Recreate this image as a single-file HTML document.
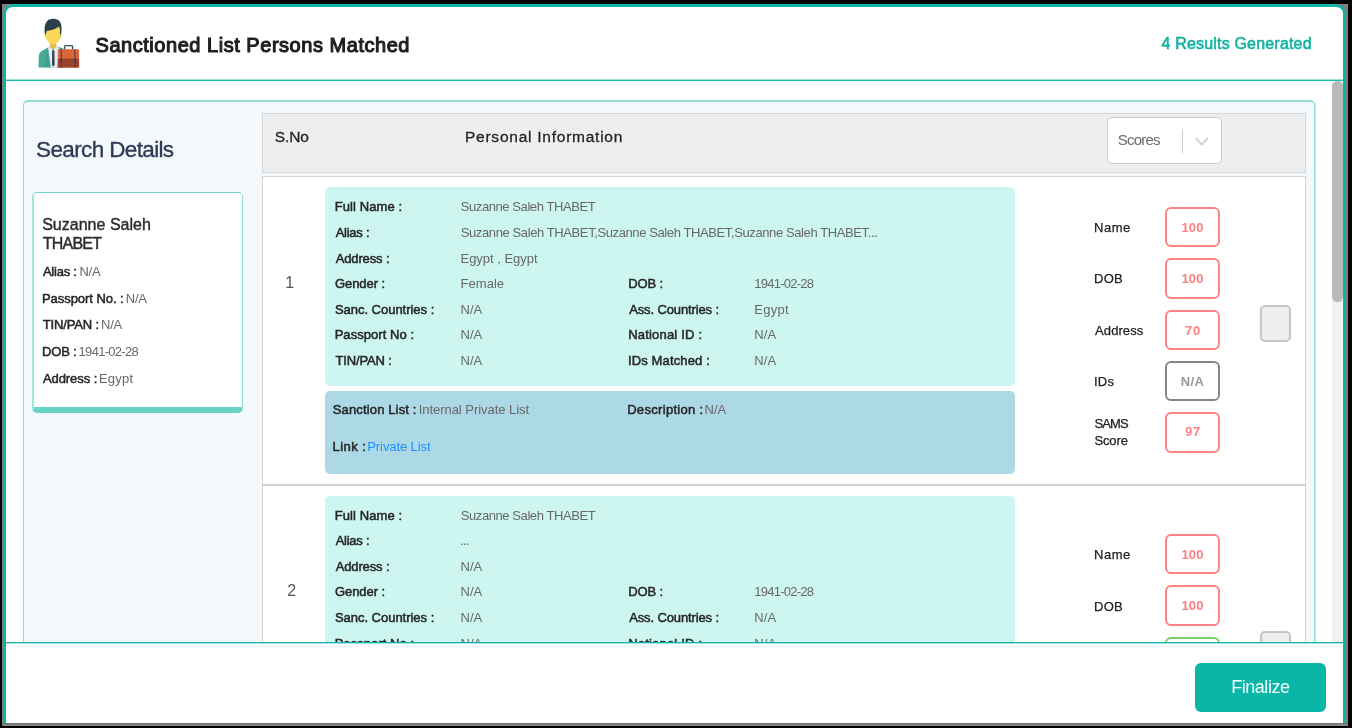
<!DOCTYPE html>
<html><head><meta charset="utf-8"><title>Sanctioned List Persons Matched</title>
<style>
html,body{margin:0;padding:0;}
body{width:1352px;height:728px;background:#000;overflow:hidden;position:relative;font-family:'Liberation Sans',sans-serif;}
div,span,svg{position:absolute;box-sizing:content-box;}
span{white-space:pre;}
#clip{left:6px;top:81px;width:1326px;height:561px;overflow:hidden;}
#inner{left:-6px;top:-81px;width:1352px;height:900px;will-change:transform;}
#top{left:0;top:0;width:1352px;height:728px;will-change:transform;}
</style></head><body>
<div style="left:2px;top:4px;width:1346px;height:722px;background:#808080;"></div>
<div style="left:4px;top:4px;width:1337px;height:716px;background:#fff;border:2px solid #0bb5a5;border-top-width:3px;border-bottom:0;border-radius:9px 9px 0 0;"></div>
<div style="left:2px;top:723px;width:1346px;height:1px;background:#707272;"></div>
<div style="left:190px;top:724px;width:1158px;height:2px;background:#838787;"></div>
<div id="clip"><div id="inner">
<div style="left:23px;top:100px;width:1290px;height:800px;background:#f3f8fc;border-style:solid;border-color:#8de0d6;border-width:2px 1px 0 1px;border-radius:5px 5px 0 0;"></div>
<div style="left:1315px;top:103px;width:1px;height:800px;background:#c9f0ec;"></div>
<div style="left:32px;top:192px;width:208px;height:214px;background:#fff;border-style:solid;border-color:#6fd6c9 #84ddd2 #66d4c6 #a3e6de;border-width:1px 1px 6px 2px;border-radius:5px;box-shadow:0 0 2px #fff;"></div>
<div style="left:262px;top:113px;width:1042px;height:58px;background:#eeeeee;border:1px solid #d6d6d6;"></div>
<div style="left:1107px;top:117px;width:113px;height:45px;background:#fff;border:1px solid #ccc;border-radius:5px;"></div>
<div style="left:1182px;top:129px;width:1px;height:24px;background:#ccc;"></div>
<svg style="left:1193px;top:135px" width="18" height="14" viewBox="0 0 18 14"><path d="M3.2 3.6 L8.8 9.6 L14.4 3.6" fill="none" stroke="#cfcfcf" stroke-width="1.9" stroke-linecap="round" stroke-linejoin="round"/></svg>
<div style="left:262px;top:176px;width:1042px;height:307px;background:#fff;border:1px solid #d2d2d2;"></div>
<div style="left:262px;top:485px;width:1042px;height:344px;background:#fff;border:1px solid #d2d2d2;"></div>
<div style="left:325px;top:187px;width:690px;height:199px;background:#cdf6f1;border-radius:5px;"></div>
<div style="left:325px;top:496px;width:690px;height:199px;background:#cdf6f1;border-radius:5px;"></div>
<div style="left:325px;top:391px;width:690px;height:82.5px;background:#add8e6;border-radius:5px;"></div>
<div style="left:325px;top:700px;width:690px;height:118px;background:#add8e6;border-radius:5px;"></div>
<div style="left:1165px;top:206.5px;width:50.5px;height:36.5px;border:2px solid #ff8585;border-radius:6px;background:#fff;"></div>
<div style="left:1165px;top:258px;width:50.5px;height:36.5px;border:2px solid #ff8585;border-radius:6px;background:#fff;"></div>
<div style="left:1165px;top:309.5px;width:50.5px;height:36.5px;border:2px solid #ff8585;border-radius:6px;background:#fff;"></div>
<div style="left:1165px;top:360.5px;width:50.5px;height:36.5px;border:2px solid #858585;border-radius:6px;background:#fff;"></div>
<div style="left:1165px;top:412px;width:50.5px;height:36.5px;border:2px solid #ff8585;border-radius:6px;background:#fff;"></div>
<div style="left:1165px;top:533.5px;width:50.5px;height:36.5px;border:2px solid #ff8585;border-radius:6px;background:#fff;"></div>
<div style="left:1165px;top:585px;width:50.5px;height:36.5px;border:2px solid #ff8585;border-radius:6px;background:#fff;"></div>
<div style="left:1165px;top:636.5px;width:50.5px;height:36.5px;border:2px solid #7ccd6a;border-radius:6px;background:#fff;"></div>
<div style="left:1165px;top:687.5px;width:50.5px;height:36.5px;border:2px solid #858585;border-radius:6px;background:#fff;"></div>
<div style="left:1165px;top:739px;width:50.5px;height:36.5px;border:2px solid #ff8585;border-radius:6px;background:#fff;"></div>
<div style="left:1260px;top:305px;width:27px;height:32.5px;background:#eeeeee;border:2px solid #c6c6c6;border-radius:5px;"></div>
<div style="left:1260px;top:631px;width:27px;height:32.5px;background:#eeeeee;border:2px solid #c6c6c6;border-radius:5px;"></div>
<span style="left:36.07px;top:139px;font-size:22.5px;line-height:22.5px;color:#2f3b55;letter-spacing:-0.635px;-webkit-text-stroke:0.35px #2f3b55;">Search Details</span>
<span style="left:42.15px;top:217px;font-size:16px;line-height:16px;color:#2b2b2b;letter-spacing:0.021px;-webkit-text-stroke:0.4px #2b2b2b;">Suzanne Saleh</span>
<span style="left:42.65px;top:236px;font-size:16px;line-height:16px;color:#2b2b2b;letter-spacing:-0.74px;-webkit-text-stroke:0.4px #2b2b2b;">THABET</span>
<span style="left:42.95px;top:265px;font-size:13px;line-height:13px;color:#262626;letter-spacing:-0.242px;-webkit-text-stroke:0.5px #262626;">Alias :</span>
<span style="left:79.4px;top:265px;font-size:13px;line-height:13px;color:#686868;letter-spacing:-0.2px;">N/A</span>
<span style="left:41.95px;top:292px;font-size:13px;line-height:13px;color:#262626;letter-spacing:-0.05px;-webkit-text-stroke:0.5px #262626;">Passport No. :</span>
<span style="left:125.8px;top:292px;font-size:13px;line-height:13px;color:#686868;letter-spacing:-0.25px;">N/A</span>
<span style="left:42.7px;top:318px;font-size:13px;line-height:13px;color:#262626;letter-spacing:-0.15px;-webkit-text-stroke:0.5px #262626;">TIN/PAN :</span>
<span style="left:101.1px;top:318px;font-size:13px;line-height:13px;color:#686868;letter-spacing:-0.3px;">N/A</span>
<span style="left:41.95px;top:345px;font-size:13px;line-height:13px;color:#262626;letter-spacing:-0.113px;-webkit-text-stroke:0.5px #262626;">DOB :</span>
<span style="left:78.6px;top:345px;font-size:13px;line-height:13px;color:#686868;letter-spacing:-0.711px;">1941-02-28</span>
<span style="left:42.95px;top:372px;font-size:13px;line-height:13px;color:#262626;letter-spacing:-0.069px;-webkit-text-stroke:0.5px #262626;">Address :</span>
<span style="left:99.0px;top:372px;font-size:13px;line-height:13px;color:#686868;letter-spacing:0.188px;">Egypt</span>
<span style="left:274.69px;top:129px;font-size:15.5px;line-height:15.5px;color:#222;letter-spacing:-0.06px;-webkit-text-stroke:0.28px #222;">S.No</span>
<span style="left:464.99px;top:129px;font-size:15.5px;line-height:15.5px;color:#222;letter-spacing:0.756px;-webkit-text-stroke:0.28px #222;">Personal Information</span>
<span style="left:1117.85px;top:132px;font-size:15px;line-height:15px;color:#6a6a6a;letter-spacing:-0.8px;">Scores</span>
<span style="left:334.65px;top:200px;font-size:13px;line-height:13px;color:#262626;letter-spacing:0.095px;-webkit-text-stroke:0.5px #262626;">Full Name :</span>
<span style="left:335.65px;top:226px;font-size:13px;line-height:13px;color:#262626;letter-spacing:-0.242px;-webkit-text-stroke:0.5px #262626;">Alias :</span>
<span style="left:335.65px;top:252px;font-size:13px;line-height:13px;color:#262626;letter-spacing:-0.119px;-webkit-text-stroke:0.5px #262626;">Address :</span>
<span style="left:334.9px;top:277px;font-size:13px;line-height:13px;color:#262626;letter-spacing:-0.036px;-webkit-text-stroke:0.5px #262626;">Gender :</span>
<span style="left:334.9px;top:303px;font-size:13px;line-height:13px;color:#262626;letter-spacing:-0.022px;-webkit-text-stroke:0.5px #262626;">Sanc. Countries :</span>
<span style="left:334.65px;top:328px;font-size:13px;line-height:13px;color:#262626;letter-spacing:0.058px;-webkit-text-stroke:0.5px #262626;">Passport No :</span>
<span style="left:335.4px;top:354px;font-size:13px;line-height:13px;color:#262626;letter-spacing:-0.125px;-webkit-text-stroke:0.5px #262626;">TIN/PAN :</span>
<span style="left:628.15px;top:277px;font-size:13px;line-height:13px;color:#262626;letter-spacing:-0.113px;-webkit-text-stroke:0.5px #262626;">DOB :</span>
<span style="left:629.15px;top:303px;font-size:13px;line-height:13px;color:#262626;letter-spacing:-0.12px;-webkit-text-stroke:0.5px #262626;">Ass. Countries :</span>
<span style="left:628.15px;top:328px;font-size:13px;line-height:13px;color:#262626;letter-spacing:0.196px;-webkit-text-stroke:0.5px #262626;">National ID :</span>
<span style="left:627.9px;top:354px;font-size:13px;line-height:13px;color:#262626;letter-spacing:0.138px;-webkit-text-stroke:0.5px #262626;">IDs Matched :</span>
<span style="left:460.75px;top:200px;font-size:13px;line-height:13px;color:#686868;letter-spacing:-0.418px;">Suzanne Saleh THABET</span>
<span style="left:460.75px;top:226px;font-size:13px;line-height:13px;color:#686868;letter-spacing:-0.395px;">Suzanne Saleh THABET,Suzanne Saleh THABET,Suzanne Saleh THABET...</span>
<span style="left:460.5px;top:252px;font-size:13px;line-height:13px;color:#686868;letter-spacing:-0.021px;">Egypt , Egypt</span>
<span style="left:460.5px;top:277px;font-size:13px;line-height:13px;color:#686868;letter-spacing:0.05px;">Female</span>
<span style="left:460.5px;top:303px;font-size:13px;line-height:13px;color:#686868;letter-spacing:0.05px;">N/A</span>
<span style="left:460.5px;top:328px;font-size:13px;line-height:13px;color:#686868;letter-spacing:0.05px;">N/A</span>
<span style="left:460.5px;top:354px;font-size:13px;line-height:13px;color:#686868;letter-spacing:0.05px;">N/A</span>
<span style="left:754.3px;top:277px;font-size:13px;line-height:13px;color:#686868;letter-spacing:-0.756px;">1941-02-28</span>
<span style="left:754.3px;top:303px;font-size:13px;line-height:13px;color:#686868;letter-spacing:0.262px;">Egypt</span>
<span style="left:754.3px;top:328px;font-size:13px;line-height:13px;color:#686868;letter-spacing:0.05px;">N/A</span>
<span style="left:754.3px;top:354px;font-size:13px;line-height:13px;color:#686868;letter-spacing:0.05px;">N/A</span>
<span style="left:285.15px;top:275px;font-size:16px;line-height:16px;color:#555;">1</span>
<span style="left:1094.12px;top:221px;font-size:13px;line-height:13px;color:#222;letter-spacing:0.45px;-webkit-text-stroke:0.25px #222;">Name</span>
<span style="left:1094.12px;top:272px;font-size:13px;line-height:13px;color:#222;letter-spacing:0.225px;-webkit-text-stroke:0.25px #222;">DOB</span>
<span style="left:1095.12px;top:324px;font-size:13px;line-height:13px;color:#222;letter-spacing:0.067px;-webkit-text-stroke:0.25px #222;">Address</span>
<span style="left:1093.88px;top:375px;font-size:13px;line-height:13px;color:#222;letter-spacing:0.35px;-webkit-text-stroke:0.25px #222;">IDs</span>
<span style="left:1094.38px;top:417px;font-size:13px;line-height:13px;color:#222;letter-spacing:-0.85px;-webkit-text-stroke:0.25px #222;">SAMS</span>
<span style="left:1094.38px;top:434px;font-size:13px;line-height:13px;color:#222;letter-spacing:-0.1px;-webkit-text-stroke:0.25px #222;">Score</span>
<span style="left:334.65px;top:509px;font-size:13px;line-height:13px;color:#262626;letter-spacing:0.095px;-webkit-text-stroke:0.5px #262626;">Full Name :</span>
<span style="left:335.65px;top:534px;font-size:13px;line-height:13px;color:#262626;letter-spacing:-0.242px;-webkit-text-stroke:0.5px #262626;">Alias :</span>
<span style="left:335.65px;top:560px;font-size:13px;line-height:13px;color:#262626;letter-spacing:-0.119px;-webkit-text-stroke:0.5px #262626;">Address :</span>
<span style="left:334.9px;top:585px;font-size:13px;line-height:13px;color:#262626;letter-spacing:-0.036px;-webkit-text-stroke:0.5px #262626;">Gender :</span>
<span style="left:334.9px;top:611px;font-size:13px;line-height:13px;color:#262626;letter-spacing:-0.022px;-webkit-text-stroke:0.5px #262626;">Sanc. Countries :</span>
<span style="left:334.65px;top:637px;font-size:13px;line-height:13px;color:#262626;letter-spacing:0.058px;-webkit-text-stroke:0.5px #262626;">Passport No :</span>
<span style="left:335.4px;top:662px;font-size:13px;line-height:13px;color:#262626;letter-spacing:-0.125px;-webkit-text-stroke:0.5px #262626;">TIN/PAN :</span>
<span style="left:628.15px;top:585px;font-size:13px;line-height:13px;color:#262626;letter-spacing:-0.113px;-webkit-text-stroke:0.5px #262626;">DOB :</span>
<span style="left:629.15px;top:611px;font-size:13px;line-height:13px;color:#262626;letter-spacing:-0.12px;-webkit-text-stroke:0.5px #262626;">Ass. Countries :</span>
<span style="left:628.15px;top:637px;font-size:13px;line-height:13px;color:#262626;letter-spacing:0.196px;-webkit-text-stroke:0.5px #262626;">National ID :</span>
<span style="left:627.9px;top:662px;font-size:13px;line-height:13px;color:#262626;letter-spacing:0.138px;-webkit-text-stroke:0.5px #262626;">IDs Matched :</span>
<span style="left:460.75px;top:509px;font-size:13px;line-height:13px;color:#686868;letter-spacing:-0.418px;">Suzanne Saleh THABET</span>
<span style="left:460.25px;top:534px;font-size:13px;line-height:13px;color:#686868;letter-spacing:-0.75px;">...</span>
<span style="left:460.5px;top:560px;font-size:13px;line-height:13px;color:#686868;letter-spacing:0.05px;">N/A</span>
<span style="left:460.5px;top:585px;font-size:13px;line-height:13px;color:#686868;letter-spacing:0.05px;">N/A</span>
<span style="left:460.5px;top:611px;font-size:13px;line-height:13px;color:#686868;letter-spacing:0.05px;">N/A</span>
<span style="left:460.5px;top:637px;font-size:13px;line-height:13px;color:#686868;letter-spacing:0.05px;">N/A</span>
<span style="left:460.5px;top:662px;font-size:13px;line-height:13px;color:#686868;letter-spacing:0.05px;">N/A</span>
<span style="left:754.3px;top:585px;font-size:13px;line-height:13px;color:#686868;letter-spacing:-0.756px;">1941-02-28</span>
<span style="left:754.3px;top:611px;font-size:13px;line-height:13px;color:#686868;letter-spacing:0.05px;">N/A</span>
<span style="left:754.3px;top:637px;font-size:13px;line-height:13px;color:#686868;letter-spacing:0.05px;">N/A</span>
<span style="left:754.3px;top:662px;font-size:13px;line-height:13px;color:#686868;letter-spacing:0.05px;">N/A</span>
<span style="left:287.15px;top:583px;font-size:16px;line-height:16px;color:#555;">2</span>
<span style="left:1094.12px;top:548px;font-size:13px;line-height:13px;color:#222;letter-spacing:0.45px;-webkit-text-stroke:0.25px #222;">Name</span>
<span style="left:1094.12px;top:600px;font-size:13px;line-height:13px;color:#222;letter-spacing:0.225px;-webkit-text-stroke:0.25px #222;">DOB</span>
<span style="left:1095.12px;top:650px;font-size:13px;line-height:13px;color:#222;letter-spacing:0.067px;-webkit-text-stroke:0.25px #222;">Address</span>
<span style="left:1093.88px;top:702px;font-size:13px;line-height:13px;color:#222;letter-spacing:0.35px;-webkit-text-stroke:0.25px #222;">IDs</span>
<span style="left:1094.38px;top:744px;font-size:13px;line-height:13px;color:#222;letter-spacing:-0.85px;-webkit-text-stroke:0.25px #222;">SAMS</span>
<span style="left:1094.38px;top:761px;font-size:13px;line-height:13px;color:#222;letter-spacing:-0.1px;-webkit-text-stroke:0.25px #222;">Score</span>
<span style="left:332.8px;top:403px;font-size:13px;line-height:13px;color:#262626;letter-spacing:0.139px;-webkit-text-stroke:0.5px #262626;">Sanction List :</span>
<span style="left:418.65px;top:403px;font-size:13px;line-height:13px;color:#686868;letter-spacing:-0.04px;">Internal Private List</span>
<span style="left:627.15px;top:403px;font-size:13px;line-height:13px;color:#262626;letter-spacing:0.317px;-webkit-text-stroke:0.5px #262626;">Description :</span>
<span style="left:704.5px;top:403px;font-size:13px;line-height:13px;color:#686868;letter-spacing:0.05px;">N/A</span>
<span style="left:332.55px;top:440px;font-size:13px;line-height:13px;color:#262626;letter-spacing:0.47px;-webkit-text-stroke:0.5px #262626;">Link :</span>
<span style="left:367.3px;top:440px;font-size:13px;line-height:13px;color:#1e8fff;letter-spacing:-0.095px;">Private List</span>
<span style="left:1181.45px;top:221px;font-size:13px;line-height:13px;color:#ff8080;font-weight:bold;letter-spacing:0.175px;">100</span>
<span style="left:1181.45px;top:272px;font-size:13px;line-height:13px;color:#ff8080;font-weight:bold;letter-spacing:0.175px;">100</span>
<span style="left:1184.95px;top:324px;font-size:13px;line-height:13px;color:#ff8080;font-weight:bold;letter-spacing:0.8px;">70</span>
<span style="left:1180.75px;top:375px;font-size:13px;line-height:13px;color:#999;font-weight:bold;letter-spacing:0.375px;">N/A</span>
<span style="left:1184.95px;top:425px;font-size:13px;line-height:13px;color:#ff8080;font-weight:bold;letter-spacing:0.8px;">97</span>
<span style="left:1181.45px;top:548px;font-size:13px;line-height:13px;color:#ff8080;font-weight:bold;letter-spacing:0.175px;">100</span>
<span style="left:1181.45px;top:599px;font-size:13px;line-height:13px;color:#ff8080;font-weight:bold;letter-spacing:0.175px;">100</span>
<span style="left:1184.95px;top:650px;font-size:13px;line-height:13px;color:#ff8080;font-weight:bold;letter-spacing:0.8px;">70</span>
<span style="left:1180.75px;top:702px;font-size:13px;line-height:13px;color:#999;font-weight:bold;letter-spacing:0.375px;">N/A</span>
<span style="left:1184.95px;top:752px;font-size:13px;line-height:13px;color:#ff8080;font-weight:bold;letter-spacing:0.8px;">97</span>
</div></div>
<div style="left:6px;top:79px;width:1337px;height:1px;background:#a3e2db;"></div>
<div style="left:6px;top:80px;width:1337px;height:1px;background:#1cb8a9;"></div>
<div style="left:1332px;top:81px;width:11px;height:561px;background:#f1f1f1;"></div>
<div style="left:1332px;top:81px;width:11px;height:220.5px;background:#b9b9b9;border-radius:5.5px;"></div>
<div style="left:6px;top:642px;width:1337px;height:1px;background:#12b6a7;"></div>
<div style="left:6px;top:643px;width:1337px;height:1px;background:#a5e3dc;"></div>
<div style="left:1195px;top:662.5px;width:131px;height:49px;background:#0ab6a7;border-radius:6px;"></div>
<div id="top">
<svg style="left:36px;top:16px" width="46" height="54" viewBox="36 16 46 54">
<path d="M38.5 67.6 L38.8 56 Q39.2 52.2 42.5 50.6 L50.2 46.6 L56.2 46.6 L63.6 48.4 L63.6 50 L61.5 50 L61.5 67.6 Z" fill="#45ab96"/>
<path d="M50.2 46.4 L53 50 L56.2 46.4 L59.2 48 L57.6 67.6 L50.6 67.6 L48 48 Z" fill="#e9eaf0"/>
<path d="M50.2 46.4 L48 48 L51 67.6 L44 67.6 Q46 56 47 48.5 Z" fill="#3a9c88" opacity=".55"/>
<path d="M49.9 41.5 L56.3 41.5 L56.3 46.6 L53.1 49.6 L49.9 46.6 Z" fill="#e6bd4c"/>
<path d="M52.2 50.8 L53.3 49.8 L54.4 50.8 L54.6 65 L53.3 66.4 L52 65 Z" fill="#2e4352"/>
<path d="M45.4 30 Q45.4 24 53.2 24 Q61.2 24 61.2 30 L61.2 35 Q61.6 34.6 61.9 35.4 Q61.9 37.6 60.6 38 Q59.4 41.6 56.3 43.6 Q53.2 45.4 50 43.6 Q47 41.6 46 38 Q44.7 37.6 44.7 35.4 Q45 34.6 45.4 35 Z" fill="#fbd65c"/>
<path d="M44.8 34.2 C44.3 28 44.6 23.5 47.5 20.7 C50.2 18.3 56 18 58.8 20.5 C61.8 23.2 62 28 61.1 34.9 L59.9 34 C60.2 31 60 28.5 59 26.5 C55 29.5 50 30.5 46.7 30.9 C46.2 32 46 33.4 45.9 34.8 Z" fill="#2b3f4d"/>
<path d="M64.6 49.6 L64.6 46.6 Q64.6 45.6 65.6 45.6 L71.6 45.6 Q72.6 45.6 72.6 46.6 L72.6 49.6" fill="none" stroke="#3c4f5c" stroke-width="1.4"/>
<rect x="57.8" y="49.3" width="21.3" height="18.3" rx="1.2" fill="#d8673b"/>
<path d="M57.8 58.6 L79.1 58.6 L79.1 66.4 Q79.1 67.6 77.9 67.6 L59 67.6 Q57.8 67.6 57.8 66.4 Z" fill="#9b4228"/>
<rect x="60.6" y="49.3" width="1.3" height="18.3" fill="#3c3f46" opacity=".8"/>
<rect x="74.3" y="49.3" width="1.3" height="18.3" fill="#3c3f46" opacity=".8"/>
<path d="M60.1 59 L62.4 59 L61.25 61.6 Z M73.8 59 L76.1 59 L74.95 61.6 Z" fill="#2e3a45"/>
</svg>
<span style="left:95.55px;top:35px;font-size:20px;line-height:20px;color:#1f1f1f;letter-spacing:0.532px;-webkit-text-stroke:1.1px #1f1f1f;">Sanctioned List Persons Matched</span>
<span style="left:1161.45px;top:36px;font-size:16px;line-height:16px;color:#12b3a3;letter-spacing:0.189px;-webkit-text-stroke:0.6px #12b3a3;">4 Results Generated</span>
<span style="left:1231.2px;top:678px;font-size:18px;line-height:18px;color:#f4fffd;letter-spacing:-0.464px;">Finalize</span>
</div>
</body></html>
